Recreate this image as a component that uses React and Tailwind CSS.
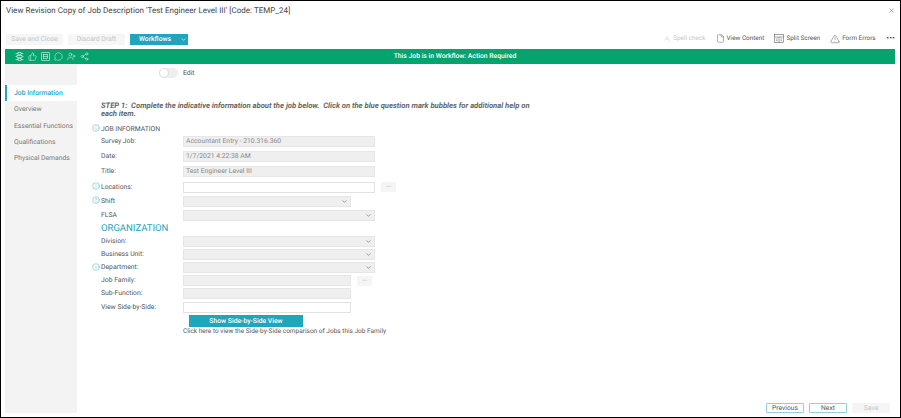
import { ChevronDown, ThumbsUp, MessageCircle, UserPlus, Share2, File, TriangleAlert, X, SpellCheck, Info, CircleHelp } from 'lucide-react'

const NAV = ['Job Information', 'Overview', 'Essential Functions', 'Qualifications', 'Physical Demands']

function SplitIcon() {
  return (
    <svg width="10" height="9" viewBox="0 0 20 18" fill="none" stroke="currentColor" strokeWidth="1.1">
      <rect x="1" y="1" width="18" height="16" />
      <path d="M1 6h18M10 6v11M4 10h3M4 13.5h3M13 10h3M13 13.5h3" />
    </svg>
  )
}

function FlowIcon() {
  return (
    <svg width="9" height="9" viewBox="0 0 18 18" fill="none" stroke="currentColor" strokeWidth="1.1">
      <path d="M1 3h5M1 9h3M1 15h5M12 3h5M14 9h3M12 15h5" />
      <rect x="6" y="1" width="6" height="4" />
      <rect x="4" y="7" width="10" height="4" />
      <rect x="6" y="13" width="6" height="4" />
    </svg>
  )
}

function FormIcon() {
  return (
    <svg width="9" height="9" viewBox="0 0 18 18" fill="none" stroke="currentColor" strokeWidth="1.1">
      <rect x="1" y="1" width="16" height="16" rx="1" />
      <rect x="5" y="5" width="8" height="8" />
      <path d="M5 9h8" />
    </svg>
  )
}

function Label({ icon, children }) {
  return (
    <div className="flex items-center w-[91px] shrink-0 text-[#555]">
      <span className="w-[9px] shrink-0 flex -mt-[2px]">
        {icon === 'info' && <Info size={8} strokeWidth={1.3} className="text-[#22a3b8]" />}
        {icon === 'help' && <CircleHelp size={8} strokeWidth={1.3} className="text-[#22a3b8]" />}
      </span>
      <span className="whitespace-nowrap">{children}</span>
    </div>
  )
}

function Field({ value, wide = true, white, select }) {
  return (
    <div className={`h-[11px] flex items-center justify-between px-[2px] ${wide ? 'w-[192px]' : 'w-[168px]'} ${white ? 'bg-white border border-[#e2e2e2]' : 'bg-[#efefef] border border-[#e6e6e6]'} text-[#8a8a8a]`}>
      <span>{value}</span>
      {select && <ChevronDown size={7} className="text-[#666]" />}
    </div>
  )
}

function Row({ icon, label, h = 'h-[15px]', children }) {
  return (
    <div className={`flex items-center ${h}`}>
      <Label icon={icon}>{label}</Label>
      {children}
    </div>
  )
}

function Dots() {
  return <div className="ml-[6px] w-[15px] h-[10px] bg-[#f5f5f5] text-[#bbb] text-[5px] leading-[10px] text-center">•••</div>
}

export default function App() {
  return (
    <div className="h-[418px] w-[901px] overflow-hidden bg-white border border-black font-['Roboto',sans-serif] [text-rendering:geometricPrecision] text-[6.8px] text-[#444] flex flex-col">
      <div className="flex items-center justify-between h-[19px] pl-[5px] pr-[5px]">
        <span className="text-[8px] tracking-[0.04px] text-[#444]">View Revision Copy of Job Description 'Test Engineer Level III' [Code: TEMP_24]</span>
        <X size={7} className="text-[#777]" />
      </div>

      <div className="flex items-center justify-between h-[14px] mt-[12px] pl-[5px] pr-[5px]">
        <div className="flex items-center">
          <div className="w-[57px] h-[11px] bg-[#f6f6f6] text-[#c4c4c4] flex items-center justify-center">Save and Close</div>
          <div className="w-[57px] h-[11px] ml-[5px] bg-[#f6f6f6] text-[#c4c4c4] flex items-center justify-center">Discard Draft</div>
          <div className="w-[58px] h-[11px] ml-[5px] bg-[#20a5bd] text-white font-medium flex items-center relative justify-center pr-[8px]">
            Workflows
            <ChevronDown size={7} className="absolute right-[1px]" />
          </div>
        </div>
        <div className="flex items-center text-[#555] text-[6.4px]">
          <span className="flex items-center gap-[2px] text-[#c8c8c8]"><SpellCheck size={8} strokeWidth={1.2} />Spell check</span>
          <span className="flex items-center gap-[2px] ml-[10px]"><File size={9} strokeWidth={1.2} />View Content</span>
          <span className="flex items-center gap-[2px] ml-[10px]"><SplitIcon />Split Screen</span>
          <span className="flex items-center gap-[2px] ml-[10px]"><TriangleAlert size={10} strokeWidth={1.2} />Form Errors</span>
          <span className="ml-[11px] font-bold tracking-[0.5px] text-[#333]">•••</span>
        </div>
      </div>

      <div className="mx-[4px] mt-[3px] h-[15px] shrink-0 w-[890px] bg-[#05a36e] flex items-center relative text-white font-medium justify-center pl-[10px]">
        <div className="absolute left-[10px] flex items-center gap-[4px]">
          <FlowIcon />
          <ThumbsUp size={9} strokeWidth={1.2} />
          <FormIcon />
          <MessageCircle size={9} strokeWidth={1.2} />
          <UserPlus size={9} strokeWidth={1.2} />
          <Share2 size={9} strokeWidth={1.2} />
        </div>
        This Job is in Workflow: Action Required
      </div>

      <div className="flex flex-1 ml-[4px]">
        <div className="w-[72px] bg-[#f3f3f3] mb-[4px] pt-[21px] shrink-0 text-[#777]">
          {NAV.map((item, i) => (
            <div key={item} className={`h-[16.3px] flex items-center whitespace-nowrap ${i === 0 ? 'bg-white text-[#20a5bd] border-l-2 border-[#20a5bd] pl-[7px] font-medium' : 'pl-[9px]'}`}>
              {item}
            </div>
          ))}
        </div>

        <div className="flex-1 flex flex-col relative">
          <div className="flex items-center ml-[82px] mt-[4px] h-[10px]">
            <div className="w-[19px] h-[10px] rounded-full bg-[#eeeeee]">
              <div className="w-[10px] h-[10px] rounded-full bg-white border border-[#ddd]" />
            </div>
            <span className="ml-[5px] text-[#555]">Edit</span>
          </div>

          <div className="ml-[24px] mt-[24px] w-[432px] text-[7.65px] italic font-bold text-[#666] leading-[8px]">
            STEP 1:&nbsp; Complete the indicative information about the job below.&nbsp; Click on the blue question mark bubbles for additional help on each item.
          </div>

          <div className="ml-[15px] mt-[6px] flex flex-col">
            <Row icon="info" label="JOB INFORMATION" h="h-[10px]" />
            <Row label="Survey Job:"><Field value="Accountant Entry - 210.316.360" /></Row>
            <Row label="Date:"><Field value="1/7/2021 4:22:38 AM" /></Row>
            <Row label="Title:"><Field value="Test Engineer Level III" /></Row>
            <div className="mt-[1px]"><Row icon="info" label="Locations:" h="h-[14px]"><Field white /><Dots /></Row></div>
            <Row icon="help" label="Shift" h="h-[14px]"><Field wide={false} select /></Row>
            <Row label="FLSA" h="h-[14px]"><Field select /></Row>
            <div className="mt-[1px] h-[12px] pl-[9px] flex items-center text-[9.5px] text-[#20a5bd]">ORGANIZATION</div>
            <Row label="Division:" h="h-[12px]"><Field select /></Row>
            <Row label="Business Unit:" h="h-[14px]"><Field select /></Row>
            <Row icon="info" label="Department:" h="h-[13px]"><Field select /></Row>
            <Row label="Job Family:" h="h-[13px]"><Field wide={false} /><Dots /></Row>
            <Row label="Sub-Function:" h="h-[13px]"><Field wide={false} /></Row>
            <Row label="View Side-by-Side:" h="h-[14px]"><Field wide={false} white /></Row>
            <div className="ml-[97px] mt-[1px] w-[114px] h-[12px] bg-[#20a5bd] text-white font-medium flex items-center justify-center">Show Side-by-Side View</div>
            <div className="ml-[91px] text-[6.5px] text-[#555] whitespace-nowrap">Click here to view the Side-by-Side comparison of Jobs this Job Family</div>
          </div>

          <div className="absolute right-[10px] bottom-[4px] flex items-center gap-[5px]">
            <div className="w-[38px] h-[10px] border border-[#8fd0dc] rounded-[1px] flex items-center justify-center text-[#555]">Previous</div>
            <div className="w-[38px] h-[10px] border border-[#8fd0dc] rounded-[1px] flex items-center justify-center text-[#555]">Next</div>
            <div className="w-[38px] h-[10px] bg-[#f5f5f5] flex items-center justify-center text-[#c4c4c4]">Save</div>
          </div>
        </div>
      </div>
    </div>
  )
}
